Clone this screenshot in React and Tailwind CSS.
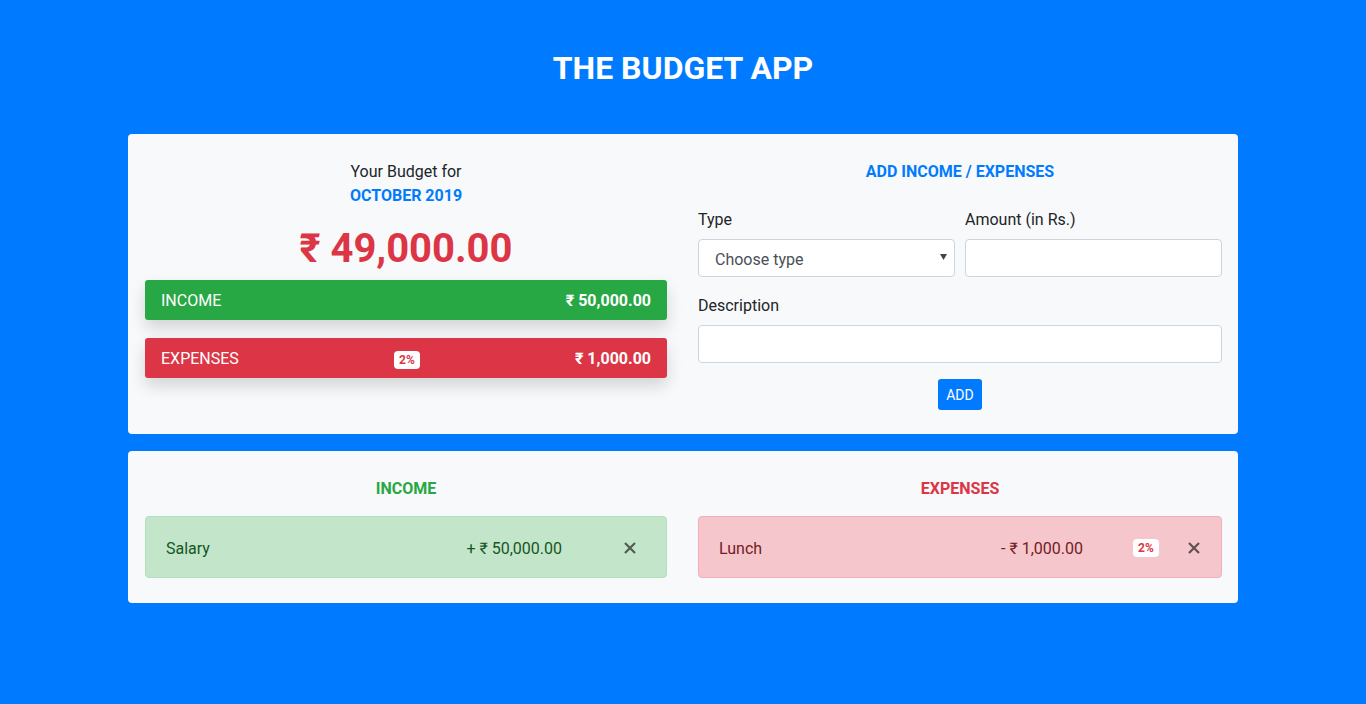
import React from "react";

function XIcon() {
  return (
    <svg width="12" height="12" viewBox="0 0 12 12" className="block">
      <path d="M1 1 L11 11 M11 1 L1 11" stroke="currentColor" strokeWidth="2.2" strokeLinecap="butt" />
    </svg>
  );
}

function Badge() {
  return (
    <span className="inline-flex items-center justify-center w-[26px] h-[18px] bg-white text-[#dc3545] text-[12px] font-bold leading-[12px] rounded-[4px]">
      2%
    </span>
  );
}

export default function App() {
  return (
    <div className="min-h-screen bg-[#007bff] [font-family:Roboto,'Liberation_Sans',sans-serif] text-[#212529]">
      <div className="w-[1110px] mx-auto pt-[49px]">
        <h1 className="text-center text-white text-[32px] font-bold leading-[38px]">THE BUDGET APP</h1>

        {/* Top card */}
        <div className="mt-[47px] bg-[#f8f9fa] rounded-[4px] pl-[17px] pr-[16px] pt-[26px] pb-[24px] grid grid-cols-[522px_524px] gap-x-[31px] items-start">
          <div>
            <div className="text-center text-base leading-6">Your Budget for</div>
            <div className="text-center text-base leading-6 font-bold text-[#007bff]">OCTOBER 2019</div>
            <div className="mt-[17px] text-center text-[40px] leading-[48px] font-bold text-[#dc3545]">₹ 49,000.00</div>
            <div className="mt-[7px] h-[40px] flex items-center justify-between px-4 pt-[2px] rounded-[3px] bg-[#28a745] text-white shadow-[0_8px_16px_rgba(0,0,0,0.15)]">
              <span className="text-base">INCOME</span>
              <span className="text-base font-bold">₹ 50,000.00</span>
            </div>
            <div className="mt-[18px] h-[40px] flex items-center px-4 pt-[2px] rounded-[3px] bg-[#dc3545] text-white shadow-[0_8px_16px_rgba(0,0,0,0.15)]">
              <span className="flex-1 text-base">EXPENSES</span>
              <span className="ml-[2px]"><Badge /></span>
              <span className="flex-1 text-right text-base font-bold">₹ 1,000.00</span>
            </div>
          </div>

          <div>
            <div className="text-center text-base leading-6 font-bold text-[#007bff]">ADD INCOME / EXPENSES</div>
            <div className="mt-[24px] grid grid-cols-2 gap-x-[10px]">
              <div>
                <div className="text-base leading-6 mb-[7px]">Type</div>
                <div className="relative h-[38px] rounded-[4px] border border-[#ced4da] bg-white flex items-center pl-[16px] pt-[4px] text-[#495057] text-base">
                  Choose type
                  <svg width="7" height="6" viewBox="0 0 7 6" className="absolute right-[7px] top-[14px]">
                    <path d="M0 0 H7 L3.5 6 Z" fill="#444" />
                  </svg>
                </div>
              </div>
              <div>
                <div className="text-base leading-6 mb-[7px]">Amount (in Rs.)</div>
                <div className="h-[38px] rounded-[4px] border border-[#ced4da] bg-white"></div>
              </div>
            </div>
            <div className="mt-[17px]">
              <div className="text-base leading-6 mb-[7px]">Description</div>
              <div className="h-[38px] rounded-[4px] border border-[#ced4da] bg-white"></div>
            </div>
            <div className="mt-4 flex justify-center">
              <button className="h-[31px] flex items-center bg-[#007bff] text-white text-sm leading-[21px] px-2 pt-[2px] rounded-[3px]">ADD</button>
            </div>
          </div>
        </div>

        {/* Bottom card */}
        <div className="mt-[17px] bg-[#f8f9fa] rounded-[4px] pl-[17px] pr-[16px] pt-[26px] pb-[25px] grid grid-cols-[522px_524px] gap-x-[31px] items-start">
          <div>
            <div className="text-center text-base leading-6 font-bold text-[#28a745]">INCOME</div>
            <div className="mt-[15px] flex items-center rounded-[4px] border border-[#b1dfbb] bg-[#c3e6cb] text-[#155724] pt-[20px] pb-[16px] pl-[20px] pr-[20px] leading-6">
              <span className="flex-1 text-base">Salary</span>
              <span className="text-base">+ ₹ 50,000.00</span>
              <span className="ml-[62px] mr-[10px] text-black/60 -mt-[2px]"><XIcon /></span>
            </div>
          </div>
          <div>
            <div className="text-center text-base leading-6 font-bold text-[#dc3545]">EXPENSES</div>
            <div className="mt-[15px] flex items-center rounded-[4px] border border-[#f1b0b7] bg-[#f5c6cb] text-[#721c24] pt-[20px] pb-[16px] pl-[20px] pr-[20px] leading-6">
              <span className="flex-1 text-base">Lunch</span>
              <span className="text-base">- ₹ 1,000.00</span>
              <span className="ml-[50px] flex -mt-[2px]"><Badge /></span>
              <span className="ml-[29px] mr-[1px] text-black/60 -mt-[2px]"><XIcon /></span>
            </div>
          </div>
        </div>
      </div>
    </div>
  );
}
